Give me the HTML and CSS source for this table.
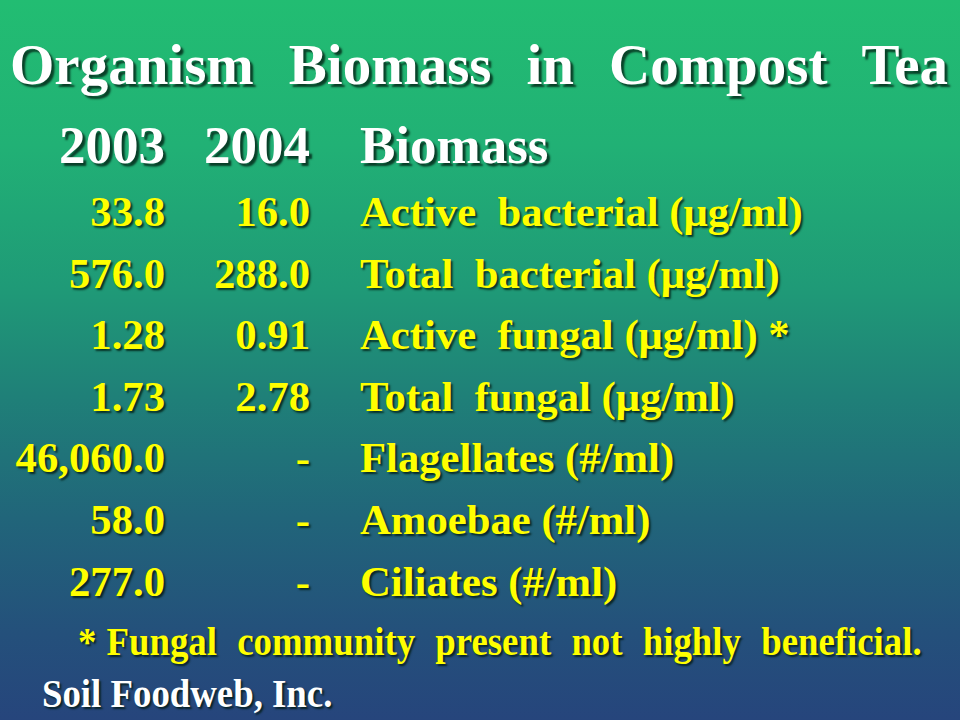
FILE: index.html
```html
<!DOCTYPE html>
<html>
<head>
<meta charset="utf-8">
<link rel="stylesheet" href="styles.css">
</head>
<body>
<div class="slide">
  <h1 class="title">Organism Biomass in Compost Tea</h1>
  <div class="table">
    <div class="row head"><span class="c1">2003</span><span class="c2">2004</span><span class="c3">Biomass</span></div>
    <div class="row"><span class="c1">33.8</span><span class="c2">16.0</span><span class="c3">Active&nbsp; bacterial (μg/ml)</span></div>
    <div class="row"><span class="c1">576.0</span><span class="c2">288.0</span><span class="c3">Total&nbsp; bacterial (μg/ml)</span></div>
    <div class="row"><span class="c1">1.28</span><span class="c2">0.91</span><span class="c3">Active&nbsp; fungal (μg/ml) *</span></div>
    <div class="row"><span class="c1">1.73</span><span class="c2">2.78</span><span class="c3">Total&nbsp; fungal (μg/ml)</span></div>
    <div class="row"><span class="c1">46,060.0</span><span class="c2">-</span><span class="c3">Flagellates (#/ml)</span></div>
    <div class="row"><span class="c1">58.0</span><span class="c2">-</span><span class="c3">Amoebae (#/ml)</span></div>
    <div class="row"><span class="c1">277.0</span><span class="c2">-</span><span class="c3">Ciliates (#/ml)</span></div>
  </div>
  <p class="note"><span class="note-text"><span class="star">*</span>Fungal community present not highly beneficial.</span></p>
  <p class="credit"><span class="credit-text">Soil Foodweb, Inc.</span></p>
</div>
</body>
</html>
```

FILE: styles.css
```css
html, body {
  margin: 0;
  padding: 0;
}
body {
  width: 960px;
  height: 720px;
  overflow: hidden;
  font-family: "Liberation Serif", "Times New Roman", serif;
  font-weight: bold;
}
.slide {
  width: 960px;
  height: 720px;
  box-sizing: border-box;
  background: linear-gradient(to bottom, #22bd72 0%, #21b175 20%, #1f9a77 40%, #1f8078 55%, #21657a 72%, #24507b 88%, #26457c 100%);
  display: flex;
  flex-direction: column;
  overflow: hidden;
}
.title {
  margin: 35px 12px 0 10px;
  font-size: 57px;
  line-height: 60px;
  font-weight: bold;
  color: #ffffff;
  text-align: justify;
  text-align-last: justify;
  text-shadow: 3px 3px 2px rgba(0, 25, 15, 0.75);
}
.table {
  margin-top: 20px;
  display: flex;
  flex-direction: column;
}
.row {
  display: grid;
  grid-template-columns: 165px 145px 1fr;
  font-size: 42.7px;
  line-height: 61.6px;
  color: #ffff00;
  text-shadow: 2px 2px 2px rgba(0, 25, 15, 0.8);
}
.row.head {
  font-size: 53px;
  line-height: 60px;
  color: #ffffff;
  margin-bottom: 6px;
  text-shadow: 3px 3px 2px rgba(0, 25, 15, 0.75);
}
.c1, .c2 {
  text-align: right;
  white-space: nowrap;
}
.c3 {
  padding-left: 50px;
  white-space: nowrap;
}
.note {
  margin: 8px 0 0 78px;
  height: 44px;
  line-height: 44px;
  color: #ffff00;
  text-shadow: 2px 2px 2px rgba(0, 25, 15, 0.8);
}
.note-text {
  display: block;
  width: 917px;
  font-size: 40px;
  text-align: justify;
  text-align-last: justify;
  white-space: nowrap;
  transform: scaleX(0.92);
  transform-origin: left center;
}
.star {
  margin-right: 11px;
}
.credit {
  margin: 8px 0 0 42px;
  height: 44px;
  line-height: 44px;
  color: #ffffff;
  text-shadow: 2px 2px 2px rgba(0, 25, 15, 0.8);
}
.credit-text {
  display: inline-block;
  font-size: 40px;
  transform: scaleX(0.92);
  transform-origin: left center;
}
```
